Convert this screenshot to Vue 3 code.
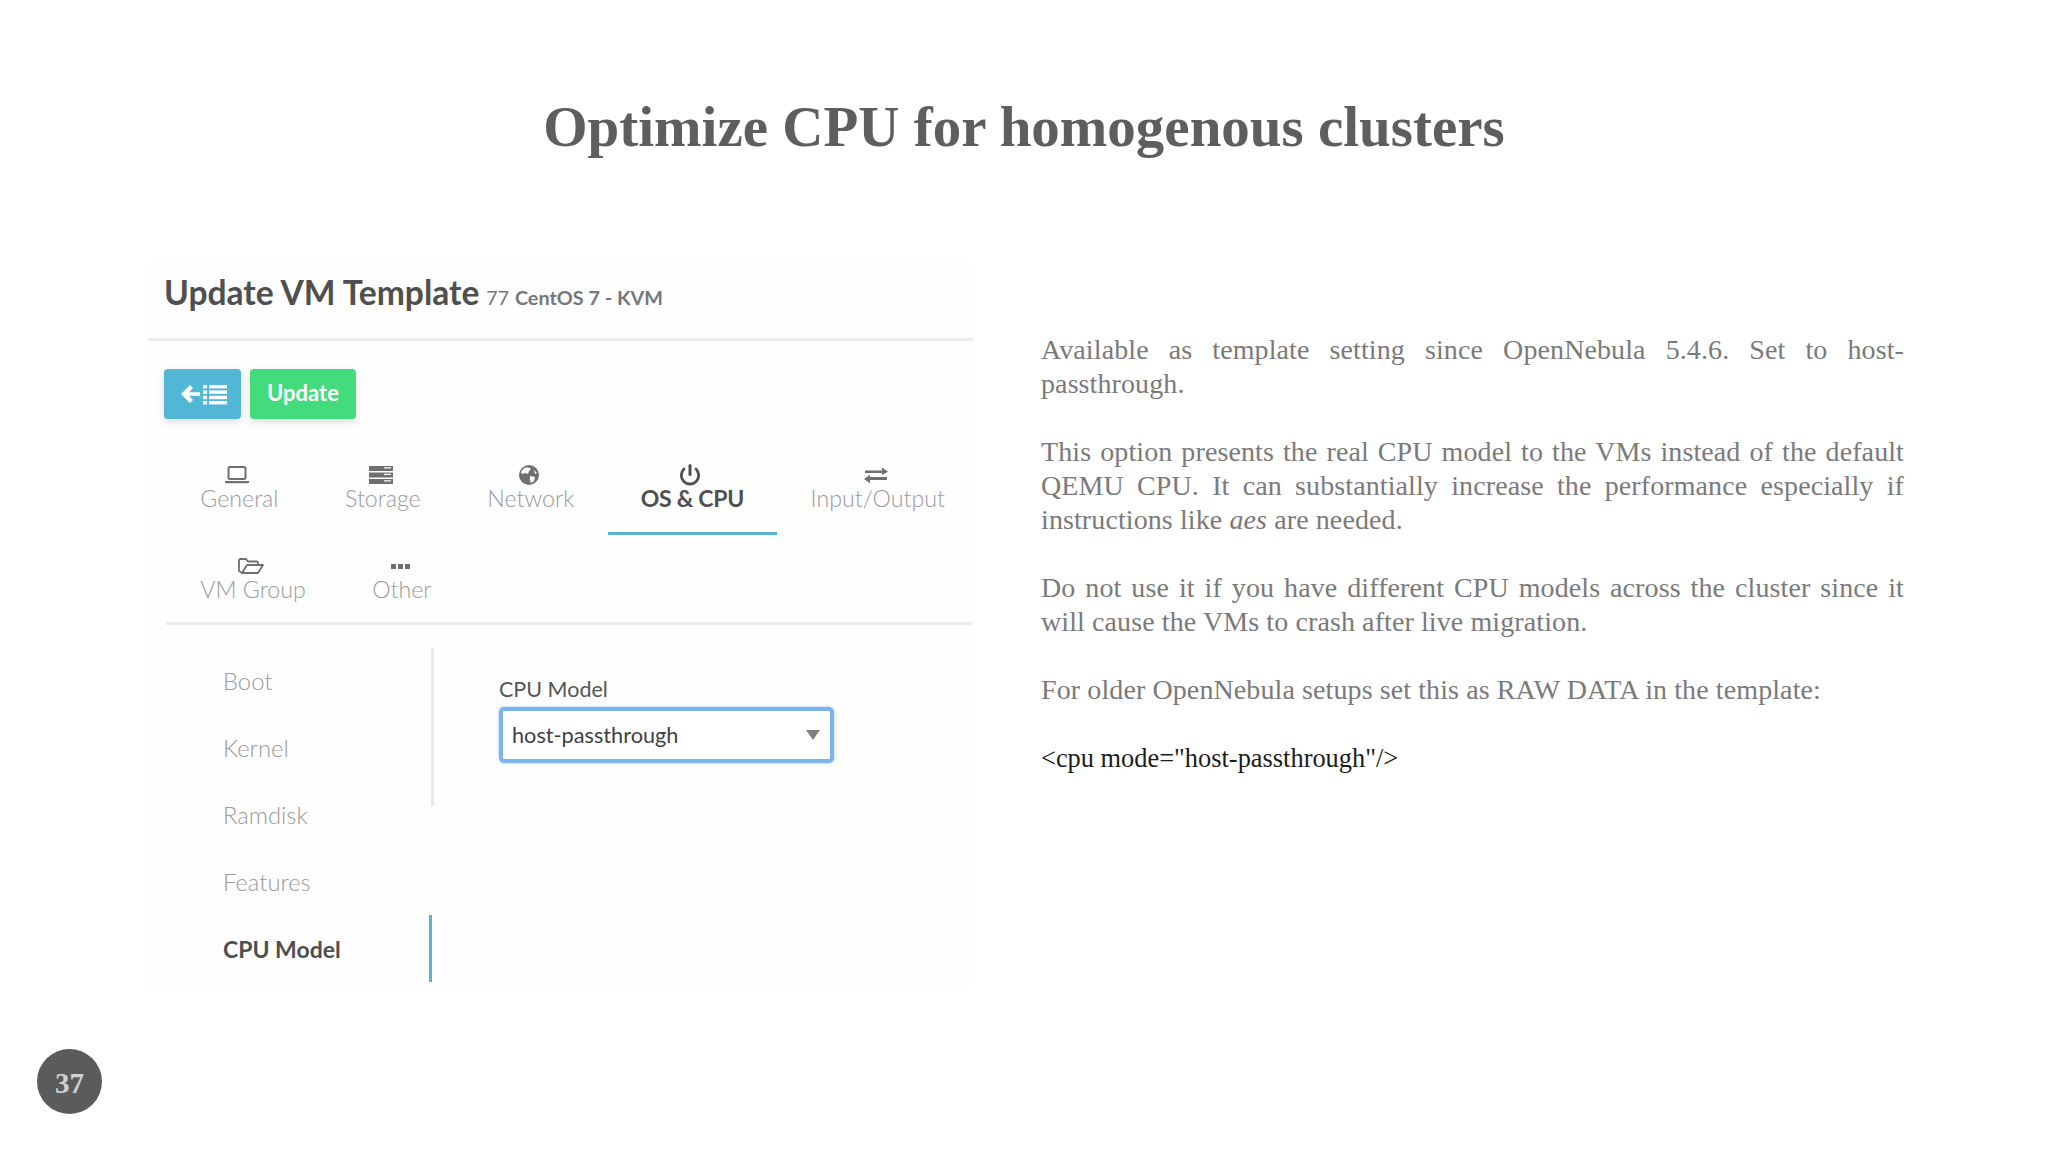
<template>
  <div class="slide">
    <h1 class="slide-title">Optimize CPU for homogenous clusters</h1>

    <div class="slide-body">
      <section class="panel">
        <header class="panel-head">
          <span class="panel-title">Update VM Template</span>
          <span class="panel-id">77</span>
          <span class="panel-name">CentOS 7 - KVM</span>
        </header>

        <div class="actions">
          <button class="btn btn-back" type="button">
            <svg width="50" height="24" viewBox="0 0 50 24">
              <path d="M12 3 3 12l9 9 3-3-4-4.200h11v-3.600H11L15 6z" fill="#fff" />
              <g fill="#fff">
                <rect x="25" y="3" width="4" height="3.400" />
                <rect x="31" y="3" width="18" height="3.400" />
                <rect x="25" y="8.400" width="4" height="3.400" />
                <rect x="31" y="8.400" width="18" height="3.400" />
                <rect x="25" y="13.800" width="4" height="3.400" />
                <rect x="31" y="13.800" width="18" height="3.400" />
                <rect x="25" y="19" width="4" height="3.400" />
                <rect x="31" y="19" width="18" height="3.400" />
              </g>
            </svg>
          </button>
          <button class="btn btn-update" type="button">Update</button>
        </div>

        <nav class="tabs">
          <div v-for="(row, i) in tabRows" :key="i" class="tab-row">
            <a
              v-for="tab in row"
              :key="tab.label"
              :class="['tab', { 'tab-active': tab.active }]"
            >
              <svg class="tab-icon" width="28" height="22" viewBox="0 0 28 22">
                <template v-if="tab.icon === 'laptop'">
                  <rect x="5.500" y="3" width="17" height="12" rx="1.500" fill="none" stroke="currentColor" stroke-width="2" />
                  <path d="M2 17h24v1.200a1 1 0 0 1-1 1H3a1 1 0 0 1-1-1z" fill="currentColor" />
                </template>
                <template v-else-if="tab.icon === 'server'">
                  <path d="M2 2h24v5H2zM2 8.500h24v5H2zM2 15h24v5H2z" fill="currentColor" />
                  <path d="M17 3.800h7M17 10.300h7M17 16.800h7" stroke="#fff" stroke-width="1.300" />
                </template>
                <template v-else-if="tab.icon === 'globe'">
                  <circle cx="14" cy="11" r="10" fill="currentColor" />
                  <path d="M9 4c3-1 6-.500 7 1l-2 2-1 3-3-1-3 1-1-2zM15 12l5 1-1 4-3 2-1-3zM19 6l3 3-2 1z" fill="#fff" />
                </template>
                <template v-else-if="tab.icon === 'power'">
                  <path d="M14 1.500v9" stroke="currentColor" stroke-width="3" stroke-linecap="round" fill="none" />
                  <path d="M8 5a8.700 8.700 0 1 0 12 0" stroke="currentColor" stroke-width="2.800" stroke-linecap="round" fill="none" />
                </template>
                <template v-else-if="tab.icon === 'exchange'">
                  <path d="M3 6.500h17V3.500l6 4.300-6 3.200V9H3zM25 13H8v-2.200L2 15l6 4.200V16h17z" fill="currentColor" />
                </template>
                <template v-else-if="tab.icon === 'folder'">
                  <path d="M5 18 2 16V5.500A1.500 1.500 0 0 1 3.500 4H9l2 2.500h8.500A1.500 1.500 0 0 1 21 8v2M5 18h16l5-8H10z" fill="none" stroke="currentColor" stroke-width="1.800" stroke-linejoin="round" />
                </template>
                <template v-else>
                  <path d="M5 9h5v5H5zM12 9h5v5h-5zM19 9h5v5h-5z" fill="currentColor" />
                </template>
              </svg>
              <span class="tab-label">{{ tab.label }}</span>
            </a>
          </div>
        </nav>

        <div class="editor">
          <ul class="side-nav">
            <li
              v-for="item in sections"
              :key="item"
              :class="['side-item', { 'side-item-active': item === 'CPU Model' }]"
            >
              {{ item }}
            </li>
          </ul>
          <div class="field">
            <label class="field-label">CPU Model</label>
            <div class="select">
              <span>host-passthrough</span>
              <i class="select-arrow"></i>
            </div>
          </div>
        </div>
      </section>

      <section class="notes">
        <p>Available as template setting since OpenNebula 5.4.6. Set to host-passthrough.</p>
        <p>This option presents the real CPU model to the VMs instead of the default QEMU CPU. It can substantially increase the performance especially if instructions like <em>aes</em> are needed.</p>
        <p>Do not use it if you have different CPU models across the cluster since it will cause the VMs to crash after live migration.</p>
        <p>For older OpenNebula setups set this as RAW DATA in the template:</p>
        <p class="code">&lt;cpu mode="host-passthrough"/&gt;</p>
      </section>
    </div>

    <div class="page-number">37</div>
  </div>
</template>

<script setup>
const tabRows = [
  [
    { label: 'General', icon: 'laptop' },
    { label: 'Storage', icon: 'server' },
    { label: 'Network', icon: 'globe' },
    { label: 'OS & CPU', icon: 'power', active: true },
    { label: 'Input/Output', icon: 'exchange' }
  ],
  [
    { label: 'VM Group', icon: 'folder' },
    { label: 'Other', icon: 'dots' }
  ]
]

const sections = ['Boot', 'Kernel', 'Ramdisk', 'Features', 'CPU Model']
</script>

<style>
html,
body {
  margin: 0;
  background: #fff;
}
</style>

<style scoped>
.slide {
  position: relative;
  width: 2048px;
  height: 1152px;
  overflow: hidden;
  background: #fff;
  box-sizing: border-box;
  padding-top: 88px;
}

.slide-title {
  margin: 0;
  text-align: center;
  font-family: "Liberation Serif", serif;
  font-size: 57px;
  line-height: 78px;
  font-weight: 700;
  color: #5e5e5e;
}

.slide-body {
  display: flex;
  margin-top: 94px;
  padding-left: 148px;
}

.panel {
  width: 825px;
  height: 730px;
  background: #fefefe;
  font-family: Lato, sans-serif;
}

.panel-head {
  display: flex;
  align-items: baseline;
  height: 81px;
  box-sizing: border-box;
  padding: 10px 0 0 16px;
  border-bottom: 3px solid #ececec;
  color: #4f4f4f;
}

.panel-title {
  font-size: 33.600px;
  line-height: 44px;
  font-weight: 700;
  margin-right: 7px;
}

.panel-id {
  font-size: 19.500px;
  color: #777;
  margin-right: 6px;
}

.panel-name {
  font-size: 19.800px;
  font-weight: 700;
  color: #777;
}

.actions {
  display: flex;
  gap: 9px;
  padding: 28px 0 0 16px;
}

.btn {
  display: flex;
  align-items: center;
  justify-content: center;
  height: 50px;
  border: 0;
  border-radius: 4px;
  padding: 0;
  color: #fff;
  font-family: Lato, sans-serif;
  font-size: 22px;
  font-weight: 700;
  box-shadow: 0 3px 8px rgba(0, 0, 0, 0.13);
}

.btn-back {
  width: 77px;
  background: #52b7d6;
}

.btn-update {
  width: 106px;
  padding-bottom: 3px;
  background: #42dc7c;
}

.tabs {
  width: 806px;
  margin: 28px 0 0 18px;
  border-bottom: 3px solid #ececec;
  box-sizing: border-box;
  height: 178px;
}

.tab-row {
  display: flex;
  padding-left: 1px;
}

.tab-row + .tab-row .tab {
  padding-top: 20px;
}

.tab {
  display: flex;
  flex-direction: column;
  align-items: center;
  box-sizing: border-box;
  height: 88px;
  padding: 17px 33.300px 0;
  color: #9a9a9a;
  border-bottom: 3px solid transparent;
}

.tab-icon {
  margin-left: -4px;
  color: #6f6f6f;
}

.tab-label {
  margin-top: -3px;
  font-size: 23.200px;
  line-height: 30px;
  font-weight: 300;
  white-space: nowrap;
}

.tab-active {
  color: #4f4f4f;
  border-bottom-color: #56b6cf;
}

.tab-active .tab-icon {
  color: #4f4f4f;
}

.tab-active .tab-label {
  font-size: 23px;
  letter-spacing: -0.300px;
  font-weight: 700;
}

.editor {
  display: flex;
  padding: 23px 0 0 18px;
}

.side-nav {
  list-style: none;
  margin: 0;
  padding: 0;
  width: 268px;
  flex-shrink: 0;
  background: linear-gradient(#eaeaea, #eaeaea) no-repeat right top / 3px 158px;
}

.side-item {
  display: flex;
  align-items: center;
  height: 66.750px;
  padding-left: 57px;
  font-size: 23.800px;
  font-weight: 300;
  color: #9a9a9a;
}

.side-item-active {
  position: relative;
  left: -2px;
  height: 67px;
  padding-left: 59px;
  font-size: 23px;
  font-weight: 700;
  color: #4f4f4f;
  border-right: 3px solid #56b6cf;
}

.field {
  padding: 27px 0 0 65px;
}

.field-label {
  display: block;
  font-size: 21.500px;
  line-height: 28px;
  font-weight: 400;
  color: #555;
}

.select {
  display: flex;
  align-items: center;
  justify-content: space-between;
  width: 335px;
  height: 56px;
  margin-top: 4px;
  box-sizing: border-box;
  padding: 0 10px 0 9px;
  background: #fff;
  border: 4px solid #7cb4f0;
  border-radius: 5px;
  box-shadow: 0 0 3px #9cc6f3;
  font-size: 21.700px;
  color: #3f3f3f;
}

.select-arrow {
  width: 0;
  height: 0;
  border-left: 7px solid transparent;
  border-right: 7px solid transparent;
  border-top: 10px solid #7f7f7f;
}

.notes {
  width: 863px;
  margin: 73px 0 0 68px;
  font-family: "Liberation Serif", serif;
  font-size: 28px;
  line-height: 34px;
  letter-spacing: 0.100px;
  color: #7a7a7a;
  text-align: justify;
}

.notes p {
  margin: 0 0 34px;
}

.notes .code {
  color: #1c1c1c;
  font-size: 26.400px;
  letter-spacing: 0;
}

.page-number {
  position: absolute;
  left: 37px;
  top: 1049px;
  display: flex;
  align-items: center;
  justify-content: center;
  width: 65px;
  height: 65px;
  box-sizing: border-box;
  padding-top: 4px;
  border-radius: 50%;
  background: #5b5b5b;
  color: #d0d0d0;
  font-family: "Liberation Serif", serif;
  font-size: 29px;
  font-weight: 700;
}
</style>
